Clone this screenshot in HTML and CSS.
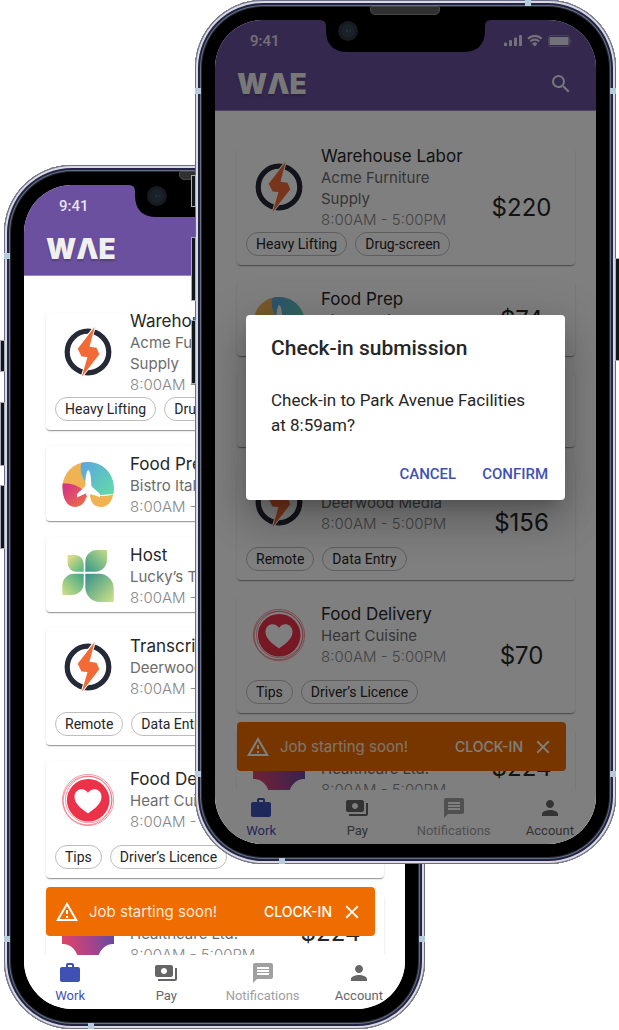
FILE: index.html
```html
<!DOCTYPE html>
<html lang="en">
<head>
<meta charset="utf-8">
<meta name="viewport" content="width=device-width, initial-scale=1">
<title>WAE – Jobs</title>
<link rel="stylesheet" href="styles.css">
</head>
<body>
<svg class="sprite" aria-hidden="true">
  <defs>
    <linearGradient id="g-sky" x1="0" y1="0" x2="1" y2="1"><stop offset="0" stop-color="#5aa2e8"/><stop offset="1" stop-color="#63dea2"/></linearGradient>
    <linearGradient id="g-berry" x1="0" y1="0" x2="1" y2="1"><stop offset="0" stop-color="#d22a90"/><stop offset="1" stop-color="#ef7a3c"/></linearGradient>
    <linearGradient id="g-tl" x1="0" y1="0" x2="1" y2="1"><stop offset="0" stop-color="#efe08a"/><stop offset="1" stop-color="#4fb581"/></linearGradient>
    <linearGradient id="g-tr" x1="1" y1="0" x2="0" y2="1"><stop offset="0" stop-color="#c3dd85"/><stop offset="1" stop-color="#35958a"/></linearGradient>
    <linearGradient id="g-bl" x1="0" y1="1" x2="1" y2="0"><stop offset="0" stop-color="#d3e285"/><stop offset="1" stop-color="#3da585"/></linearGradient>
    <linearGradient id="g-br" x1="1" y1="1" x2="0" y2="0"><stop offset="0" stop-color="#cfe387"/><stop offset="1" stop-color="#34918a"/></linearGradient>
    <linearGradient id="g-health" x1="0" y1="0.6" x2="1" y2="0.4"><stop offset="0" stop-color="#dd4468"/><stop offset="0.5" stop-color="#a8448a"/><stop offset="1" stop-color="#5f4b9f"/></linearGradient>
    <clipPath id="lungs"><path d="M26 3C41 3 52 15 52 29C52 40 47 48 39 48C33 48 29 44 28.500 39L26.500 35L24 39C23 44 18 48 13 48C5 48 0.500 39 0.500 29C0.500 15 11 3 26 3Z"/></clipPath>
  </defs>
  <symbol id="logo-bolt" viewBox="0 0 52 52">
    <circle cx="26" cy="26" r="20.800" fill="none" stroke="#262936" stroke-width="5.200"/>
    <path d="M32.700 0.700L15.700 22.700L19.500 30.500L25.500 31L19.700 51L37.300 28.300L34.500 21.800L27.500 20.800Z" fill="#f26b36" stroke="#fff" stroke-width="2" paint-order="stroke"/>
  </symbol>
  <symbol id="logo-lungs" viewBox="0 0 52 52">
    <g clip-path="url(#lungs)">
      <path d="M0 0H30V30H0Z" fill="#f0b354"/>
      <path d="M20 2C17 10 19 20 28 27L38 36L53 35V0Z" fill="url(#g-sky)"/>
      <path d="M0 24.500C9 24 18 26 25 35V50H0Z" fill="url(#g-berry)"/>
      <path d="M28 35C34 37 44 38 53 35V50H27Z" fill="#f0b354"/>
    </g>
    <path d="M26.300 11C28.300 12 29.300 19 29.300 27L38 35V38.500L29 34.500C28 36 27.700 38 26.300 40C25 38 24.500 36 23.600 34.500L15 38.500V35L23.300 27C23.300 19 24.300 12 26.300 11Z" fill="#fff"/>
  </symbol>
  <symbol id="logo-clover" viewBox="0 0 52 52">
    <path d="M5.600 5H13A8.600 8.600 0 0 1 21.700 13.700V21.700H14.200A8.600 8.600 0 0 1 5.600 13Z" fill="url(#g-tl)"/>
    <path d="M45 0V10A11.700 11.700 0 0 1 33.300 21.700H23.300V11.700A11.700 11.700 0 0 1 35 0Z" fill="url(#g-tr)"/>
    <path d="M0.300 45V35.400A11.700 11.700 0 0 1 12 23.700H21.700V33.300A11.700 11.700 0 0 1 10 45Z" fill="url(#g-bl)"/>
    <path d="M51.700 52H38A14.700 14.700 0 0 1 23.300 37.300V23.700H37A14.700 14.700 0 0 1 51.700 38.400Z" fill="url(#g-br)"/>
  </symbol>
  <symbol id="logo-heart" viewBox="0 0 52 52">
    <g fill="none" stroke="#ee5164" stroke-width="0.600"><circle cx="26" cy="26" r="25.600"/><circle cx="25.500" cy="26.500" r="24.300"/><circle cx="26.700" cy="25.600" r="23.200"/></g>
    <circle cx="26.200" cy="26.200" r="21.300" fill="#ec3249"/>
    <path d="M26 39.500C20 35 12.500 30 12.500 23C12.500 14.500 22.500 13 26 19C29.500 13 39.500 14.500 39.500 23C39.500 30 32 35 26 39.500Z" fill="#fff"/>
  </symbol>
  <symbol id="logo-health" viewBox="0 0 52 52">
    <path d="M17 0H35A17 17 0 0 0 52 17V37H50A16 16 0 0 0 36 52H16A16 16 0 0 0 2 37H0V17A17 17 0 0 0 17 0Z" fill="url(#g-health)"/>
  </symbol>
  <symbol id="i-search" viewBox="0 0 24 24"><path d="M15.500 14h-.79l-.28-.27A6.470 6.470 0 0 0 16 9.500 6.500 6.500 0 1 0 9.500 16c1.610 0 3.090-.59 4.230-1.570l.27.28v.79l5 4.990L20.490 19l-4.990-5zm-6 0C7.010 14 5 11.990 5 9.500S7.010 5 9.500 5 14 7.010 14 9.500 11.990 14 9.500 14z"/></symbol>
  <symbol id="i-warn" viewBox="0 0 24 24"><path d="M12 5.990L19.530 19H4.470L12 5.990M12 2L1 21h22L12 2zm1 14h-2v2h2v-2zm0-6h-2v4h2v-4z"/></symbol>
  <symbol id="i-close" viewBox="0 0 24 24"><path d="M19 6.410L17.590 5 12 10.590 6.410 5 5 6.410 10.590 12 5 17.590 6.410 19 12 13.410 17.590 19 19 17.590 13.410 12z"/></symbol>
  <symbol id="i-work" viewBox="0 0 24 24"><path d="M20 6h-4V4c0-1.110-.89-2-2-2h-4c-1.110 0-2 .89-2 2v2H4c-1.110 0-1.990.89-1.990 2L2 19c0 1.110.89 2 2 2h16c1.110 0 2-.89 2-2V8c0-1.110-.89-2-2-2zm-6 0h-4V4h4v2z"/></symbol>
  <symbol id="i-pay" viewBox="0 0 24 24"><path d="M19 14V6c0-1.100-.9-2-2-2H3c-1.100 0-2 .9-2 2v8c0 1.100.9 2 2 2h14c1.100 0 2-.9 2-2zm-9-1c-1.660 0-3-1.340-3-3s1.340-3 3-3 3 1.340 3 3-1.340 3-3 3zm13-6v11c0 1.100-.9 2-2 2H4v-2h17V7h2z"/></symbol>
  <symbol id="i-chat" viewBox="0 0 24 24"><path d="M20 2H4c-1.100 0-1.990.9-1.990 2L2 22l4-4h14c1.100 0 2-.9 2-2V4c0-1.100-.9-2-2-2zM18 14H6v-2h12v2zm0-3H6V9h12v2zm0-3H6V6h12v2z"/></symbol>
  <symbol id="i-user" viewBox="0 0 24 24"><path d="M12 12c2.210 0 4-1.790 4-4s-1.790-4-4-4-4 1.790-4 4 1.790 4 4 4zm0 2c-2.670 0-8 1.340-8 4v2h16v-2c0-2.660-5.330-4-8-4z"/></symbol>
  <symbol id="i-status" viewBox="0 0 68 12">
    <path d="M0 8.500a1 1 0 0 1 1-1h1a1 1 0 0 1 1 1v2.500H0zM5 6a1 1 0 0 1 1-1h1a1 1 0 0 1 1 1v5H5zM10 3.500a1 1 0 0 1 1-1h1a1 1 0 0 1 1 1v7.500h-3zM15 1a1 1 0 0 1 1-1h1a1 1 0 0 1 1 1v10h-3z"/>
    <path d="M24 3.800a9.500 9.500 0 0 1 13.600 0M26.500 6.500a6 6 0 0 1 8.600 0" fill="none" stroke="currentColor" stroke-width="2.200"/>
    <path d="M30.800 11.500l-2.700-2.800a3.800 3.800 0 0 1 5.400 0z"/>
    <rect x="44.500" y="0.500" width="21" height="11" rx="2.500" fill="none" stroke="currentColor" opacity="0.350"/>
    <rect x="45.500" y="2" width="19" height="8" rx="1"/>
    <path d="M66.500 4.200c1.300.3 1.300 3.300 0 3.600z" opacity="0.500"/>
  </symbol>
  <symbol id="i-notch" viewBox="0 0 171 32">
    <path d="M0 0Q6 0 6 6V10Q6 32 28 32H143Q165 32 165 10V6Q165 0 171 0Z" fill="#000"/>
    <circle cx="28" cy="11" r="10" fill="#171b20"/><circle cx="28" cy="11" r="7" fill="#1b2128"/><circle cx="27" cy="11" r="1" fill="#2c343d"/><circle cx="30" cy="11" r="1" fill="#272f37"/>
  </symbol>
</svg>

<main class="stage">
  <article class="phone phone-back" aria-label="Job list">
    <i class="key key-mute"></i><i class="key key-up"></i><i class="key key-down"></i><i class="key key-power"></i>
    <i class="band band-top"></i><i class="band band-bottom"></i><i class="band band-l1"></i><i class="band band-l2"></i><i class="band band-r1"></i><i class="band band-r2"></i>
    <i class="speaker"></i>
    <div class="screen">
      <header class="top">
        <div class="status"><span>9:41</span><svg class="signals"><use href="#i-status"/></svg></div>
        <div class="bar"><a class="brand" href="#">WΛE</a><button class="icon-btn" aria-label="Search"><svg class="icon"><use href="#i-search"/></svg></button></div>
      </header>
      <div class="feed">
        <ul class="jobs">
          <li class="job"><div class="lead"><svg class="logo"><use href="#logo-bolt"/></svg><div class="info"><h2>Warehouse Labor</h2><p>Acme Furniture Supply</p><time>8:00AM - 5:00PM</time></div></div><div class="tags"><span>Heavy Lifting</span><span>Drug-screen</span></div><strong class="price">$220</strong></li>
          <li class="job"><div class="lead"><svg class="logo"><use href="#logo-lungs"/></svg><div class="info"><h2>Food Prep</h2><p>Bistro Italian</p><time>8:00AM - 5:00PM</time></div></div><strong class="price">$74</strong></li>
          <li class="job"><div class="lead"><svg class="logo"><use href="#logo-clover"/></svg><div class="info"><h2>Host</h2><p>Lucky’s Tavern</p><time>8:00AM - 5:00PM</time></div></div><strong class="price">$92</strong></li>
          <li class="job"><div class="lead"><svg class="logo"><use href="#logo-bolt"/></svg><div class="info"><h2>Transcription</h2><p>Deerwood Media</p><time>8:00AM - 5:00PM</time></div></div><div class="tags"><span>Remote</span><span>Data Entry</span></div><strong class="price">$156</strong></li>
          <li class="job"><div class="lead"><svg class="logo"><use href="#logo-heart"/></svg><div class="info"><h2>Food Delivery</h2><p>Heart Cuisine</p><time>8:00AM - 5:00PM</time></div></div><div class="tags"><span>Tips</span><span>Driver’s Licence</span></div><strong class="price">$70</strong></li>
          <li class="job"><div class="lead"><svg class="logo"><use href="#logo-health"/></svg><div class="info"><h2>Nurse</h2><p>Healthcare Ltd.</p><time>8:00AM - 5:00PM</time></div></div><strong class="price">$224</strong></li>
        </ul>
        <div class="snack" role="status"><svg class="icon"><use href="#i-warn"/></svg><span class="snack-text">Job starting soon!</span><button class="snack-action">CLOCK-IN</button><button class="icon-btn" aria-label="Dismiss"><svg class="icon small"><use href="#i-close"/></svg></button></div>
      </div>
      <nav class="tabs" aria-label="Main">
        <a class="tab on" href="#"><svg class="icon"><use href="#i-work"/></svg>Work</a>
        <a class="tab" href="#"><svg class="icon"><use href="#i-pay"/></svg>Pay</a>
        <a class="tab muted" href="#"><svg class="icon"><use href="#i-chat"/></svg>Notifications</a>
        <a class="tab" href="#"><svg class="icon"><use href="#i-user"/></svg>Account</a>
      </nav>
      <svg class="notch"><use href="#i-notch"/></svg>
    </div>
  </article>

  <article class="phone phone-front" aria-label="Check-in confirmation">
    <i class="key key-mute"></i><i class="key key-up"></i><i class="key key-down"></i><i class="key key-power"></i>
    <i class="band band-top"></i><i class="band band-bottom"></i><i class="band band-l1"></i><i class="band band-l2"></i><i class="band band-r1"></i><i class="band band-r2"></i>
    <i class="speaker"></i>
    <div class="screen">
      <header class="top">
        <div class="status"><span>9:41</span><svg class="signals"><use href="#i-status"/></svg></div>
        <div class="bar"><a class="brand" href="#">WΛE</a><button class="icon-btn" aria-label="Search"><svg class="icon"><use href="#i-search"/></svg></button></div>
      </header>
      <div class="feed">
        <ul class="jobs">
          <li class="job"><div class="lead"><svg class="logo"><use href="#logo-bolt"/></svg><div class="info"><h2>Warehouse Labor</h2><p>Acme Furniture Supply</p><time>8:00AM - 5:00PM</time></div></div><div class="tags"><span>Heavy Lifting</span><span>Drug-screen</span></div><strong class="price">$220</strong></li>
          <li class="job"><div class="lead"><svg class="logo"><use href="#logo-lungs"/></svg><div class="info"><h2>Food Prep</h2><p>Bistro Italian</p><time>8:00AM - 5:00PM</time></div></div><strong class="price">$74</strong></li>
          <li class="job"><div class="lead"><svg class="logo"><use href="#logo-clover"/></svg><div class="info"><h2>Host</h2><p>Lucky’s Tavern</p><time>8:00AM - 5:00PM</time></div></div><strong class="price">$92</strong></li>
          <li class="job"><div class="lead"><svg class="logo"><use href="#logo-bolt"/></svg><div class="info"><h2>Transcription</h2><p>Deerwood Media</p><time>8:00AM - 5:00PM</time></div></div><div class="tags"><span>Remote</span><span>Data Entry</span></div><strong class="price">$156</strong></li>
          <li class="job"><div class="lead"><svg class="logo"><use href="#logo-heart"/></svg><div class="info"><h2>Food Delivery</h2><p>Heart Cuisine</p><time>8:00AM - 5:00PM</time></div></div><div class="tags"><span>Tips</span><span>Driver’s Licence</span></div><strong class="price">$70</strong></li>
          <li class="job"><div class="lead"><svg class="logo"><use href="#logo-health"/></svg><div class="info"><h2>Nurse</h2><p>Healthcare Ltd.</p><time>8:00AM - 5:00PM</time></div></div><strong class="price">$224</strong></li>
        </ul>
        <div class="snack" role="status"><svg class="icon"><use href="#i-warn"/></svg><span class="snack-text">Job starting soon!</span><button class="snack-action">CLOCK-IN</button><button class="icon-btn" aria-label="Dismiss"><svg class="icon small"><use href="#i-close"/></svg></button></div>
      </div>
      <nav class="tabs" aria-label="Main">
        <a class="tab on" href="#"><svg class="icon"><use href="#i-work"/></svg>Work</a>
        <a class="tab" href="#"><svg class="icon"><use href="#i-pay"/></svg>Pay</a>
        <a class="tab muted" href="#"><svg class="icon"><use href="#i-chat"/></svg>Notifications</a>
        <a class="tab" href="#"><svg class="icon"><use href="#i-user"/></svg>Account</a>
      </nav>
      <div class="scrim">
        <section class="dialog" role="dialog" aria-modal="true" aria-labelledby="dialog-title">
          <h1 id="dialog-title">Check-in submission</h1>
          <p>Check-in to Park Avenue Facilities at 8:59am?</p>
          <div class="actions"><button>CANCEL</button><button>CONFIRM</button></div>
        </section>
      </div>
      <svg class="notch"><use href="#i-notch"/></svg>
    </div>
  </article>
</main>
</body>
</html>
```

FILE: styles.css
```css
* { box-sizing: border-box; }
body { margin: 0; background: #fff; color: #262626; font-family: Inter, "Liberation Sans", sans-serif; }
h1, h2, p, ul { margin: 0; padding: 0; }
button { margin: 0; padding: 0; border: 0; background: none; color: inherit; cursor: pointer; }
a { color: inherit; text-decoration: none; }
.sprite { position: absolute; width: 0; height: 0; }
.icon { display: block; width: 24px; height: 24px; fill: currentColor; }
.icon.small { width: 22px; height: 22px; }

/* Two overlapping phones share the middle column and row */
.stage {
  display: grid;
  grid-template-columns: 191px 1fr 191px;
  grid-template-rows: 165px auto 165px;
  padding: 0 3px 0 4px;
  overflow: hidden;
}
.phone {
  position: relative;
  align-self: start;
  padding: 20px;
  border-radius: 68px;
  background: #000;
  box-shadow: inset 0 0 0 1px #6d6c84, inset 0 0 0 3px #d9d9e0, inset 0 0 0 5px #24234a, inset 0 0 0 6px #66727f, inset 0 0 0 7px #262c33;
}
.phone-back { grid-area: 2 / 1 / 4 / 3; }
.phone-front { grid-area: 1 / 2 / 3 / 4; }

.key { position: absolute; left: -4px; width: 5px; background: #11161a; border: 1px solid #a9acb8; }
.key-mute { top: 175px; height: 32px; }
.key-up { top: 237px; height: 64px; }
.key-down { top: 320px; height: 64px; }
.key-power { left: auto; right: -4px; top: 258px; height: 103px; }
.band { position: absolute; width: 6px; height: 6px; background: #b5cbde; }
.band-top { right: 85px; top: 0; }
.band-bottom { left: 84px; bottom: 0; }
.band-l1 { left: 0; top: 88px; }
.band-l2 { left: 0; bottom: 87px; }
.band-r1 { right: 0; top: 88px; }
.band-r2 { right: 0; bottom: 87px; }
.speaker { position: absolute; left: 175px; right: 176px; top: 6px; height: 9px; border-radius: 2px 2px 5px 5px; background: #303030; border: 1px solid #484848; }

.screen {
  position: relative;
  display: flex;
  flex-direction: column;
  aspect-ratio: 381 / 824;
  overflow: hidden;
  border-radius: 48px;
  background: #fff;
}
.notch { position: absolute; top: 0; left: 50%; width: 171px; height: 32px; margin-left: -86px; }

.top { flex: none; padding-bottom: 4px; background: #6a509f; color: #f0f0f0; border-bottom: 1px solid #9a88c0; }
.status { display: flex; justify-content: space-between; align-items: center; height: 41px; padding: 0 24px 0 35px; font: 500 15px/20px Roboto, sans-serif; color: #e6e2ee; }
.signals { width: 68px; height: 12px; fill: currentColor; }
.bar { display: flex; justify-content: space-between; align-items: center; height: 45px; padding: 0 23px 0 22px; }
.brand { font-size: 28px; line-height: 32px; font-weight: 900; text-shadow: 0 2px 2px rgba(0, 0, 0, .2); }

.feed { position: relative; flex: 1; min-height: 0; overflow: hidden; }
.jobs { display: grid; gap: 16px; padding: 37px 21px 0 22px; list-style: none; }
.job {
  display: grid;
  grid-template-columns: 1fr 107px;
  border-radius: 4px;
  background: #fff;
  box-shadow: 0 2px 1px -1px rgba(0, 0, 0, .25), 0 1px 1px rgba(0, 0, 0, .16), 0 1px 3px rgba(0, 0, 0, .1);
}
.lead { grid-column: 1; display: flex; align-items: center; gap: 16px; height: 75px; padding: 3px 0 0 16px; }
.logo { flex: none; width: 52px; height: 52px; }
.info { flex: 1; min-width: 0; }
.info h2 { font-size: 17px; line-height: 22px; font-weight: 400; }
.info p { font-size: 15px; line-height: 21px; color: #6c6c6c; }
.info time { display: block; font-size: 15px; line-height: 21px; font-weight: 300; color: #888; }
.tags { grid-column: 1; display: flex; gap: 8px; padding: 9px 0 9px 9px; }
.tags span { padding: 0 9px; border: 1px solid #bdbdbd; border-radius: 12px; font: 400 14px/22px Roboto, sans-serif; white-space: nowrap; }
.price { grid-column: 2; grid-row: 1 / span 2; align-self: center; padding-top: 3px; text-align: center; font-size: 24px; line-height: 30px; font-weight: 400; }

.snack { position: absolute; left: 22px; right: 30px; bottom: 19px; display: flex; align-items: center; height: 49px; padding: 0 12px 0 9px; border-radius: 4px; background: #ef6c00; color: #fff; }
.snack-text { flex: 1; padding-left: 10px; font-size: 15px; line-height: 20px; color: #fdeadb; }
.snack-action { margin-right: 9px; font: 500 14px/20px Inter, sans-serif; }

.tabs { flex: none; display: grid; grid-template-columns: repeat(4, 1fr); height: 54px; margin: 0 -2px; padding-top: 6px; background: #fff; color: #666; }
.tab { display: flex; flex-direction: column; align-items: center; gap: 2px; font: 400 13px/18px Roboto, sans-serif; }
.tab.on { color: #3f51b5; }
.tab.muted { color: #a0a0a0; }

.scrim { position: absolute; inset: 0; display: grid; align-content: center; padding: 0 31px 49px; background: rgba(0, 0, 0, .5); }
.dialog { padding: 21px 17px 14px 25px; border-radius: 4px; background: #fff; font-family: Roboto, sans-serif; box-shadow: 0 11px 15px -7px rgba(0, 0, 0, .2), 0 24px 38px 3px rgba(0, 0, 0, .14), 0 9px 46px 8px rgba(0, 0, 0, .12); }
.dialog h1 { font-size: 21px; line-height: 24px; font-weight: 500; }
.dialog p { margin-top: 28px; padding-right: 8px; font-size: 17px; line-height: 25px; }
.actions { display: flex; justify-content: flex-end; gap: 26px; margin-top: 24px; color: #3f51b5; }
.actions button { font: 500 15px/24px Roboto, sans-serif; }
```
